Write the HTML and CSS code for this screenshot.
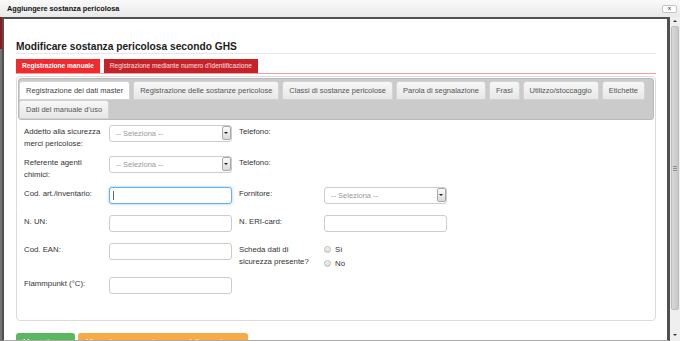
FILE: index.html
```html
<!DOCTYPE html>
<html lang="it">
<head>
    <meta charset="UTF-8">
    <meta name="viewport" content="width=device-width, initial-scale=1.0">
    <title>Aggiungere sostanza pericolosa</title>
    <link rel="stylesheet" href="styles.css">
</head>
<body>
    <div class="titlebar">
        <span class="title">Aggiungere sostanza pericolosa</span>
        <span class="close">x</span>
    </div>
    <div class="window">
        <div class="backdrop"></div>
        <div class="frame">
            <div class="content">
                <h1>Modificare sostanza pericolosa secondo GHS</h1>
                <ul class="mode-tabs">
                    <li class="active">Registrazione manuale</li>
                    <li>Registrazione mediante numero d'identificazione</li>
                </ul>
                <div class="tabs">
                    <ul class="tab-nav">
                        <li class="active">Registrazione dei dati master</li>
                        <li>Registrazione delle sostanze pericolose</li>
                        <li>Classi di sostanze pericolose</li>
                        <li>Parola di segnalazione</li>
                        <li>Frasi</li>
                        <li>Utilizzo/stoccaggio</li>
                        <li>Etichette</li>
                        <li>Dati del manuale d'uso</li>
                    </ul>
                    <div class="form">
                        <div class="row">
                            <label>Addetto alla sicurezza merci pericolose:</label>
                            <div class="field select"><span>-- Seleziona --</span><i></i></div>
                            <label class="label2">Telefono:</label>
                        </div>
                        <div class="row">
                            <label>Referente agenti chimici:</label>
                            <div class="field select"><span>-- Seleziona --</span><i></i></div>
                            <label class="label2">Telefono:</label>
                        </div>
                        <div class="row">
                            <label>Cod. art./inventario:</label>
                            <div class="field focus"><span class="caret"></span></div>
                            <label class="label2">Fornitore:</label>
                            <div class="field select"><span>-- Seleziona --</span><i></i></div>
                        </div>
                        <div class="row">
                            <label>N. UN:</label>
                            <input class="field" type="text">
                            <label class="label2">N. ERI-card:</label>
                            <input class="field" type="text">
                        </div>
                        <div class="row">
                            <label>Cod. EAN:</label>
                            <input class="field" type="text">
                            <label class="label2">Scheda dati di sicurezza presente?</label>
                            <div class="radios">
                                <div class="radio"><span class="dot"></span>Sì</div>
                                <div class="radio"><span class="dot"></span>No</div>
                            </div>
                        </div>
                        <div class="row">
                            <label>Flammpunkt (°C):</label>
                            <input class="field" type="text">
                        </div>
                    </div>
                </div>
                <div class="buttons">
                    <button class="btn btn-green">Memorizzare</button>
                    <button class="btn btn-orange">Memorizzare e aggiungere un'altra sostanza</button>
                </div>
            </div>
        </div>
        <div class="scrollbar">
            <div class="sb-up"></div>
            <div class="sb-thumb"><span class="grip"></span></div>
            <div class="sb-track"></div>
            <div class="sb-down"></div>
        </div>
    </div>
</body>
</html>
```

FILE: styles.css
```css
* {
    box-sizing: border-box;
}
html, body {
    margin: 0;
    padding: 0;
}
body {
    width: 680px;
    height: 341px;
    overflow: hidden;
    font-family: "Liberation Sans", Arial, sans-serif;
    color: #333;
    background-color: #fff;
}
.titlebar {
    height: 17px;
    display: flex;
    align-items: center;
    justify-content: space-between;
    padding: 0 3px 0 7px;
    background: linear-gradient(#f9f9f9, #e9e9e9);
}
.title {
    font-size: 7.3px;
    font-weight: bold;
    color: #111;
}
.close {
    width: 15px;
    height: 8px;
    border: 1px solid #c4c4c4;
    border-radius: 2px;
    background-color: #fff;
    font-size: 6px;
    line-height: 5px;
    font-weight: bold;
    text-align: center;
    color: #666;
}
.window {
    display: flex;
    height: 324px;
}
.backdrop {
    width: 2px;
    background: linear-gradient(#8a1c1c 0, #8a1c1c 32px, #747474 32px);
}
.frame {
    width: 668px;
    border-top: 2px solid #505050;
    border-left: 2px solid #505050;
    border-right: 3px solid #505050;
    border-bottom: 1px solid #aaa;
    overflow: hidden;
}
.content {
    padding: 21.5px 11px 0 12px;
}
h1 {
    margin: 0;
    font-size: 10.2px;
    line-height: 12px;
    font-weight: bold;
    color: #1c1c1c;
    border-bottom: 1px solid #e6e6e6;
}
.mode-tabs {
    list-style: none;
    margin: 5px 0 0;
    padding: 0;
    display: flex;
    border-bottom: 1px solid #f0a0a0;
}
.mode-tabs li {
    height: 14px;
    line-height: 14px;
    padding: 0 6px;
    margin-right: 4px;
    font-size: 6.6px;
    color: #f8e0e0;
    background-color: #c6222a;
}
.mode-tabs li.active {
    background-color: #f12a2e;
    color: #fff;
    font-weight: bold;
}
.tabs {
    margin-top: 2px;
    padding: 1px;
    border: 1px solid #dcdcdc;
    border-radius: 4px;
}
.tab-nav {
    list-style: none;
    margin: 0;
    padding: 2px 0 0;
    display: flex;
    flex-wrap: wrap;
    background-color: #cbcbcb;
    border: 1px solid #bababa;
    border-radius: 3px;
}
.tab-nav li {
    height: 19px;
    line-height: 17px;
    padding: 0 6px;
    margin-right: 3px;
    font-size: 7.5px;
    color: #555;
    background: linear-gradient(#f7f7f7, #e7e7e7);
    border: 1px solid #d3d3d3;
    border-radius: 3px 3px 0 0;
    white-space: nowrap;
}
.tab-nav li.active {
    background: #fff;
    color: #444;
}
.form {
    padding: 2px 6px 17px;
}
.row {
    display: flex;
    align-items: flex-start;
    padding: 3px 0;
}
.row label {
    width: 85px;
    padding: 1px 5px 0 0;
    font-size: 7.8px;
    line-height: 12px;
}
.row .label2 {
    margin-left: 7px;
}
.field {
    width: 123px;
    height: 17px;
    margin: 0 0 5px;
    padding: 0;
    border: 1px solid #ccc;
    border-radius: 3px;
    background-color: #fff;
}
.select {
    display: flex;
    align-items: center;
    justify-content: space-between;
    padding: 0 0.5px 0 6px;
    font-size: 7.5px;
    color: #999;
}
.select i {
    width: 9px;
    height: 14px;
    display: flex;
    align-items: center;
    justify-content: center;
    border: 1px solid #a8a8a8;
    border-radius: 2px;
    background: linear-gradient(#fbfbfb, #dadada);
}
.select i::after {
    content: "";
    border-left: 2px solid transparent;
    border-right: 2px solid transparent;
    border-top: 2px solid #222;
}
.focus {
    position: relative;
    border-color: #66afe9;
    box-shadow: 0 0 3px rgba(102, 175, 233, 0.7);
}
.caret {
    position: absolute;
    left: 3px;
    top: 3px;
    width: 1px;
    height: 9px;
    background-color: #666;
}
.radios {
    display: flex;
    flex-direction: column;
}
.radio {
    display: flex;
    align-items: center;
    height: 14px;
    font-size: 7.8px;
}
.radio .dot {
    width: 7px;
    height: 7px;
    margin-right: 4px;
    border: 1px solid #bbb;
    border-radius: 50%;
    background: linear-gradient(#f4f4f4, #dcdcdc);
}
.buttons {
    display: flex;
    margin-top: 12px;
}
.btn {
    height: 22px;
    margin-right: 3px;
    padding: 3.5px 7px 0;
    border: 0;
    border-radius: 3px;
    font-family: "Liberation Sans", Arial, sans-serif;
    font-size: 7.8px;
    line-height: 12px;
    color: #fff;
    display: flex;
    align-items: flex-start;
}
.btn-green {
    background-color: #5cb85c;
}
.btn-orange {
    padding: 3.5px 8px 0;
    background-color: #f6ab45;
}
.scrollbar {
    width: 10px;
    display: flex;
    flex-direction: column;
    background-color: #efefef;
}
.sb-up, .sb-down {
    height: 8px;
    display: flex;
    align-items: center;
    justify-content: center;
}
.sb-up::after {
    content: "";
    border-left: 2px solid transparent;
    border-right: 2px solid transparent;
    border-bottom: 2px solid #333;
}
.sb-down {
    height: 9px;
    margin-bottom: 2px;
}
.sb-down::after {
    content: "";
    border-left: 2px solid transparent;
    border-right: 2px solid transparent;
    border-top: 2px solid #333;
}
.sb-thumb {
    height: 284px;
    margin: 1px 1px 0;
    display: flex;
    align-items: center;
    justify-content: center;
    border: 1px solid #bdbdbd;
    border-radius: 2px;
    background: linear-gradient(90deg, #d8d8d8, #c8c8c8);
}
.grip {
    width: 4px;
    height: 5px;
    background: repeating-linear-gradient(#8e8e8e 0, #8e8e8e 1px, transparent 1px, transparent 2px);
}
.sb-track {
    flex: 1;
}
```
